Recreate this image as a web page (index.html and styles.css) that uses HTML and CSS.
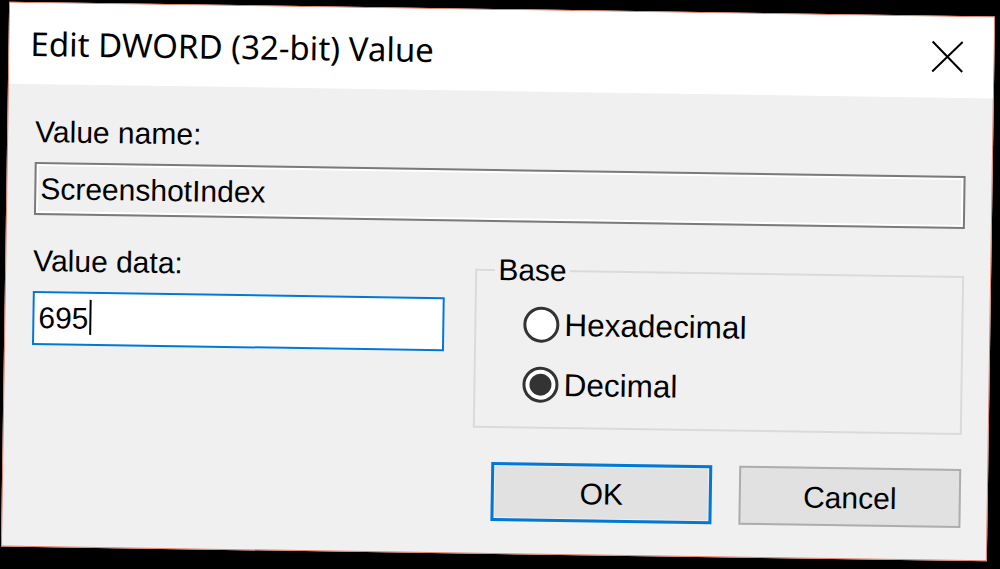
FILE: index.html
```html
<!DOCTYPE html>
<html lang="en">
  <head>
    <meta charset="UTF-8" />
    <title>Edit DWORD (32-bit) Value</title>
    <link rel="stylesheet" href="styles.css">
  </head>
  <body>
    <div class="dialog">
      <div class="titlebar">
        <span class="title">Edit DWORD (32-bit) Value</span>
        <svg class="close" width="32" height="32" viewBox="0 0 32 32">
          <path d="M1 1 L31 31 M31 1 L1 31" stroke="#000" stroke-width="2" fill="none" />
        </svg>
      </div>

      <div class="content">
        <div class="label">Value name:</div>
        <div class="field readonly">ScreenshotIndex</div>

        <div class="row">
          <div class="col-data">
            <div class="label">Value data:</div>
            <div class="field active">695<span class="caret"></span></div>
          </div>

          <fieldset class="base">
            <legend>Base</legend>
            <div class="radio-row">
              <span class="radio"></span>
              <span class="radio-text">Hexadecimal</span>
            </div>
            <div class="radio-row">
              <span class="radio checked"></span>
              <span class="radio-text">Decimal</span>
            </div>
          </fieldset>
        </div>

        <div class="buttons">
          <div class="btn default">OK</div>
          <div class="btn">Cancel</div>
        </div>
      </div>
    </div>
  </body>
</html>
```

FILE: styles.css
```css
html, body {
  margin: 0;
  padding: 0;
  background-color: #000;
  height: 100%;
  overflow: hidden;
}

body {
  font-family: "Liberation Sans", Arial, sans-serif;
  font-size: 30px;
  line-height: 36px;
  color: #000;
}

.dialog {
  box-sizing: border-box;
  width: 986px;
  height: 545px;
  margin-left: 5px;
  margin-top: 9px;
  background: #f0f0f0;
  border: 1px solid #e2806a;
  transform: rotate(0.86deg);
  display: flex;
  flex-direction: column;
}

.titlebar {
  height: 81px;
  background: #fff;
  display: flex;
  align-items: center;
  padding: 0 0 0 21px;
  flex-shrink: 0;
}

.title {
  font-family: "Noto Sans", "Open Sans", sans-serif;
  font-size: 33px;
  line-height: 82px;
  flex: 1;
}

.close {
  margin-right: 30px;
  margin-top: -2px;
}

.content {
  padding: 30px 26px 0 27px;
}

.label {
  margin-bottom: 12px;
}

.field {
  box-sizing: border-box;
  height: 53px;
  line-height: 49px;
  padding-left: 4px;
  white-space: nowrap;
}

.field.readonly {
  border: 2px solid #7a7a7a;
  box-shadow: inset 0 0 0 2px #fff;
  background: #f0f0f0;
}

.field.active {
  border: 2px solid #0078d7;
  background: #fff;
  height: 54px;
  line-height: 50px;
}

.caret {
  display: inline-block;
  width: 2px;
  height: 35px;
  background: #000;
  vertical-align: -6px;
  margin-left: 1px;
}

.row {
  display: flex;
  margin-top: 28px;
}

.col-data {
  width: 414px;
}

.base {
  box-sizing: border-box;
  width: 491px;
  margin: 2px 0 0 30px;
  padding: 18px 0 24px 18px;
  border: 2px solid #dadada;
}

.base legend {
  padding: 0 3px;
}

.radio-row {
  display: flex;
  align-items: center;
  margin-left: 29px;
  height: 36px;
}

.radio-row + .radio-row {
  margin-top: 24px;
}

.radio {
  box-sizing: border-box;
  width: 36px;
  height: 36px;
  border: 3px solid #333;
  border-radius: 50%;
  background: #fff;
  display: flex;
  align-items: center;
  justify-content: center;
  flex-shrink: 0;
}

.radio.checked::after {
  content: "";
  width: 22px;
  height: 22px;
  border-radius: 50%;
  background: #333;
}

.radio-text {
  margin-left: 5px;
  font-size: 31.5px;
}

.buttons {
  display: flex;
  justify-content: flex-end;
  gap: 27px;
  margin-top: 34px;
}

.btn {
  box-sizing: border-box;
  width: 222px;
  height: 59px;
  background: #e1e1e1;
  border: 2px solid #adadad;
  display: flex;
  align-items: center;
  justify-content: center;
  padding-top: 2px;
}

.btn.default {
  border: 3px solid #0078d7;
  box-shadow: inset 0 0 0 1px #f0f0f0;
  width: 221px;
}
```
